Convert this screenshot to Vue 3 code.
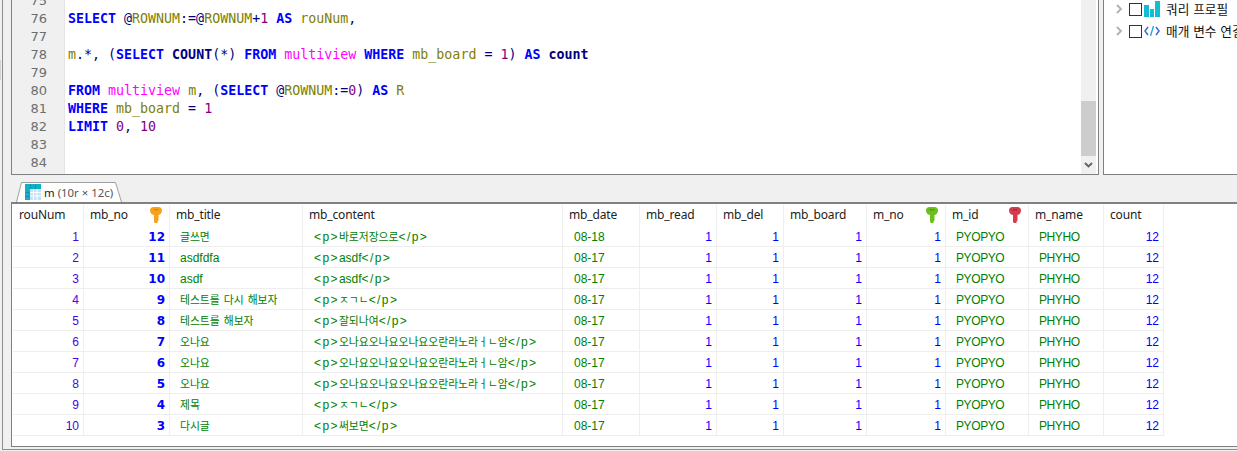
<script setup>
const kw = 'kw', fn = 'fn', id = 'id', num = 'num', tb = 'tb', op = 'op', vr = 'vr'
const lines = [
  { n: 75, t: [] },
  { n: 76, t: [[kw, 'SELECT'], [op, ' @'], [vr, 'ROWNUM'], [op, ':=@'], [vr, 'ROWNUM'], [op, '+'], [num, '1'], [op, ' '], [kw, 'AS'], [op, ' '], [id, 'rouNum'], [op, ',']] },
  { n: 77, t: [] },
  { n: 78, t: [[id, 'm'], [op, '.*, ('], [kw, 'SELECT'], [op, ' '], [fn, 'COUNT'], [op, '(*) '], [kw, 'FROM'], [op, ' '], [tb, 'multiview'], [op, ' '], [kw, 'WHERE'], [op, ' '], [id, 'mb_board'], [op, ' = '], [num, '1'], [op, ') '], [kw, 'AS'], [op, ' '], [fn, 'count']] },
  { n: 79, t: [] },
  { n: 80, t: [[kw, 'FROM'], [op, ' '], [tb, 'multiview'], [op, ' '], [id, 'm'], [op, ', ('], [kw, 'SELECT'], [op, ' @'], [vr, 'ROWNUM'], [op, ':='], [num, '0'], [op, ') '], [kw, 'AS'], [op, ' '], [id, 'R']] },
  { n: 81, t: [[kw, 'WHERE'], [op, ' '], [id, 'mb_board'], [op, ' = '], [num, '1']] },
  { n: 82, t: [[kw, 'LIMIT'], [op, ' '], [num, '0'], [op, ', '], [num, '10']] },
  { n: 83, t: [] },
  { n: 84, t: [] }
]

const columns = [
  { name: 'rouNum', w: 71 }, { name: 'mb_no', w: 86, key: 'orange' }, { name: 'mb_title', w: 133 },
  { name: 'mb_content', w: 260 }, { name: 'mb_date', w: 77 }, { name: 'mb_read', w: 77 },
  { name: 'mb_del', w: 67 }, { name: 'mb_board', w: 83 }, { name: 'm_no', w: 79, key: 'green' },
  { name: 'm_id', w: 83, key: 'red' }, { name: 'm_name', w: 75 }, { name: 'count', w: 60 }
]
const gridCols = columns.map(c => c.w + 'px').join(' ')
const keyColors = {
  orange: ['#f7a21e', '#d98a10'], green: ['#6cc01c', '#4f9c10'], red: ['#d23c4c', '#a82a38']
}

const titles = ['글쓰면', 'asdfdfa', 'asdf', '테스트를 다시 해보자', '테스트를 해보자', '오나요', '오나요', '오나요', '제목', '다시글']
const long = '오나요오나요오나요오란라노라ㅓㄴ암'
const bodies = ['바로저장으로', 'asdf', 'asdf', 'ㅈㄱㄴ', '잘되나여', long, long, long, 'ㅈㄱㄴ', '써보면']
const split = s => s.split(/(<\/?p>|[\u3131-\uD7A3 ]*[\u3131-\uD7A3])/).filter(Boolean).map(text => ({
  text,
  cls: /[\u3131-\uD7A3]/.test(text) ? 'kr' : text.includes('<') ? 'tag' : ''
}))
const rows = titles.map((t, i) => ({
  idx: i + 1,
  no: 12 - i,
  title: split(t),
  body: split('<p>' + bodies[i] + '</p>'),
  date: i === 0 ? '08-18' : '08-17'
}))
</script>

<template>
  <div class="window">
    <div class="handle"></div>
    <div class="frame">
      <div class="top">
        <div class="editor">
          <div class="gutter">
            <div v-for="l in lines" :key="l.n" class="ln">{{ l.n }}</div>
          </div>
          <div class="code">
            <div v-for="l in lines" :key="l.n" class="cl">
              <span v-for="(s, i) in l.t" :key="i" :class="s[0]">{{ s[1] }}</span>
            </div>
          </div>
          <div class="scroll">
            <div class="thumb"></div>
            <svg class="down" width="9" height="6" viewBox="0 0 9 6"><path d="M1 1l3.500 3.500L8 1" fill="none" stroke="#606060" stroke-width="1.800"/></svg>
          </div>
        </div>
        <div class="side">
          <div class="tree">
            <svg class="arrow" width="7" height="10" viewBox="0 0 7 10"><path d="M1 1l4 4-4 4" fill="none" stroke="#b0b0b0" stroke-width="1.800"/></svg>
            <span class="check"></span>
            <svg class="ti" width="16" height="16" viewBox="0 0 16 16"><path d="M0 4h5v12H0zM6 8h4v8H6zM11 0h5v16h-5z" fill="#12bcd4"/></svg>
            <span class="tl">쿼리 프로필</span>
          </div>
          <div class="tree">
            <svg class="arrow" width="7" height="10" viewBox="0 0 7 10"><path d="M1 1l4 4-4 4" fill="none" stroke="#b0b0b0" stroke-width="1.800"/></svg>
            <span class="check"></span>
            <svg class="ti" width="16" height="12" viewBox="0 0 16 12"><path d="M4 2L1 6l3 4M12 2l3 4-3 4" fill="none" stroke="#4468d8" stroke-width="1.500"/><path d="M9.500 1L6.500 11" fill="none" stroke="#18a8d8" stroke-width="1.300"/></svg>
            <span class="tl">매개 변수 연결</span>
          </div>
        </div>
      </div>

      <div class="tabs">
        <div class="tab">
          <svg class="tabshape" width="106" height="20" viewBox="0 0 106 20"><path d="M0.500 20L5.500 0.500H99.500L105.500 20" fill="#fff" stroke="#a0a0a0"/></svg>
          <svg class="tabicon" width="16" height="16" viewBox="0 0 16 16">
            <rect width="16" height="16" fill="#12b0c8"/>
            <path d="M5 5h11v11H5z" fill="#bfe3f7"/>
            <path d="M5 8.500h11M5 12h11M8.500 5v11M12 5v11" stroke="#fff" stroke-width="1"/>
            <path d="M5.500 0v5M10.500 0v5M0 8.500h5M0 12.500h5" stroke="#0a98b0" stroke-width="1"/>
          </svg>
          <span class="tabtext">m <i>(10r × 12c)</i></span>
        </div>
      </div>

      <div class="results">
        <div class="grid" :style="{ gridTemplateColumns: gridCols }">
          <div v-for="c in columns" :key="c.name" class="th">
            <span>{{ c.name }}</span>
            <svg v-if="c.key" class="key" width="12" height="16" viewBox="0 0 12 16">
              <path d="M3.500 0h5C10.700 0 12 1.300 12 3.500S10.700 7.500 8.500 8V13.500L7.500 14.500V16H5L4 15V8C1.500 7.500 0 5.800 0 3.500S1.300 0 3.500 0z" :fill="keyColors[c.key][0]"/>
              <rect x="3.500" y="2" width="5" height="1.600" rx=".8" :fill="keyColors[c.key][1]"/>
            </svg>
          </div>
          <template v-for="r in rows" :key="r.idx">
            <div class="td right purple">{{ r.idx }}</div>
            <div class="td right bold">{{ r.no }}</div>
            <div class="td text"><span v-for="(s, i) in r.title" :key="i" :class="s.cls">{{ s.text }}</span></div>
            <div class="td text wide"><span v-for="(s, i) in r.body" :key="i" :class="s.cls">{{ s.text }}</span></div>
            <div class="td text wide">{{ r.date }}</div>
            <div class="td right blue">1</div>
            <div class="td right blue">1</div>
            <div class="td right blue">1</div>
            <div class="td right blue">1</div>
            <div class="td text caps">PYOPYO</div>
            <div class="td text caps">PHYHO</div>
            <div class="td right blue">12</div>
          </template>
        </div>
      </div>
    </div>
  </div>
</template>

<style>
html, body { margin: 0; background: #f0f0f0; overflow: hidden; }
</style>

<style scoped>
.window {
  position: relative;
  width: 1237px;
  height: 451px;
  box-sizing: border-box;
  padding: 0 0 1px 2px;
  background: #f0f0f0;
  overflow: hidden;
}
.handle {
  position: absolute;
  left: 0;
  top: 60px;
  width: 1px;
  height: 20px;
  background: #d4d4d4;
}
.frame {
  height: 450px;
  box-sizing: border-box;
  border-left: 1px solid #8c8c8c;
  border-bottom: 1px solid #8c8c8c;
  padding: 0 0 2px 8px;
  display: flex;
  flex-direction: column;
}
.top {
  height: 175px;
  flex: none;
  display: flex;
  gap: 4px;
}
.editor {
  width: 1088px;
  flex: none;
  box-sizing: border-box;
  border: 1px solid #808080;
  border-top: 0;
  background: #fff;
  display: flex;
  overflow: hidden;
}
.gutter {
  width: 52px;
  flex: none;
  background: #f0f0f0;
  border-right: 1px solid #e4e4e4;
}
.ln, .cl {
  height: 18px;
  font: 13.3px/18px "DejaVu Sans Mono", monospace;
  white-space: pre;
}
.ln:first-child, .cl:first-child { margin-top: -8px; }
.ln {
  text-align: right;
  padding-right: 17px;
  color: #6e6e6e;
  font-family: "DejaVu Sans", sans-serif;
  font-size: 13px;
}
.code { flex: 1; padding-left: 3px; }
.kw { color: #0000ff; font-weight: 700; }
.fn { color: #000080; font-weight: 700; }
.id { color: #808000; }
.num { color: #800080; }
.tb { color: #ff00ff; }
.op { color: #000080; }
.vr { color: #808000; }
.scroll {
  width: 15px;
  margin-right: 2px;
  flex: none;
  background: #f0f0f0;
  display: flex;
  flex-direction: column;
  align-items: center;
}
.thumb {
  width: 15px;
  height: 55px;
  margin-top: 101px;
  background: #cdcdcd;
}
.down { margin-top: 6px; }
.side {
  flex: 1;
  min-width: 0;
  box-sizing: border-box;
  border-left: 1px solid #808080;
  border-bottom: 1px solid #808080;
  background: #fff;
  padding-left: 12px;
  overflow: hidden;
}
.tree {
  height: 22px;
  display: flex;
  align-items: center;
  white-space: nowrap;
  margin-top: -2px;
}
.tree + .tree { margin-top: 0; }
.arrow { flex: none; }
.check {
  width: 11px;
  height: 11px;
  margin-left: 6px;
  border: 1px solid #333;
  flex: none;
}
.ti { margin-left: 2px; flex: none; }
.tl {
  flex: none;
  margin: 0 0 2px 6px;
  font: 12.7px "Noto Sans CJK KR", sans-serif;
  word-spacing: 1px;
  color: #111;
}
.tabs {
  height: 27px;
  flex: none;
  display: flex;
  align-items: flex-end;
  padding-left: 5px;
}
.tab {
  position: relative;
  width: 106px;
  height: 20px;
  display: flex;
  align-items: center;
  padding-left: 9px;
  box-sizing: border-box;
}
.tabshape { position: absolute; left: 0; top: 0; }
.tabicon { position: relative; flex: none; }
.tabtext {
  position: relative;
  margin-left: 3px;
  font: 11.4px "Noto Sans", sans-serif;
  color: #222;
  white-space: nowrap;
}
.tabtext i { font-style: normal; color: #555; }
.results {
  flex: 1;
  box-sizing: border-box;
  border: 1px solid #808080;
  border-width: 2px 0 1px 1px;
  background: #fff;
  padding-left: 1px;
  min-height: 0;
}
.grid {
  display: grid;
  width: max-content;
  grid-auto-rows: 21px;
  grid-template-rows: 22px;
  font: 12px "Liberation Sans", sans-serif;
}
.th {
  display: flex;
  align-items: center;
  justify-content: space-between;
  padding: 0 7px 2px 6px;
  border-right: 1px solid #eeeeee;
  color: #222;
  margin-top: 1px;
  font-family: "Noto Sans", sans-serif;
  letter-spacing: -0.15px;
}
.key { flex: none; }
.td {
  box-sizing: border-box;
  border-right: 1px solid #eeeeee;
  border-bottom: 1px solid #eeeeee;
  line-height: 22px;
  white-space: nowrap;
  overflow: hidden;
}
.right { text-align: right; padding-right: 4px; color: #0000ff; }
.purple { color: #5000e0; }
.bold { font-family: "DejaVu Sans", sans-serif; font-weight: 700; font-size: 12px; color: #0000ff; }
.blue { color: #0000ff; }
.text { color: #008000; padding-left: 10px; }
.wide { padding-left: 11px; }
.caps { letter-spacing: -0.4px; }
.tag { letter-spacing: 1.400px; }
.kr { font: 10.800px "Noto Sans CJK KR", sans-serif; word-spacing: 1.600px; color: #008000; }
</style>
